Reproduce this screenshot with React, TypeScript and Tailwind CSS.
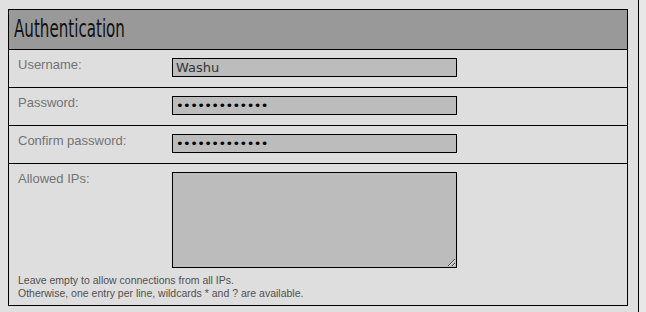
import React from 'react'

function Row({ label, children, last }: { label: string; children: React.ReactNode; last?: boolean }) {
  return (
    <div className={`flex ${last ? '' : 'border-b border-black'}`}>
      <div className="w-[163px] shrink-0 pl-[9px] pt-[5px] text-[13px] text-[#737373]">{label}</div>
      <div className="pt-[8px] pb-[10px]">{children}</div>
    </div>
  )
}

export default function App() {
  const field =
    'block h-[19px] w-[285px] border border-black bg-[#bcbcbc] px-[3px] text-[13px] text-[#333] outline-none'

  return (
    <div className="flex h-[312px] w-[646px] bg-[#e0e0e0]" style={{ fontFamily: '"Liberation Sans", Arial, sans-serif' }}>
      <div className="w-[638px] shrink-0 pl-[8px] pt-[9px]">
        <div className="w-[620px] border border-black bg-[#dedede]">
          <div className="h-[40px] border-b border-black bg-[#999999] pl-[5px]">
            <h2
              className="origin-left scale-x-[0.7] pt-[5px] text-[24px] leading-[28px] text-[#111]"
              style={{ fontFamily: '"DejaVu Sans Condensed", "Liberation Sans Narrow", "DejaVu Sans", sans-serif' }}
            >
              Authentication
            </h2>
          </div>

          <Row label="Username:">
            <input className={field} style={{ fontFamily: '"DejaVu Sans", Verdana, sans-serif' }} defaultValue="Washu" />
          </Row>
          <Row label="Password:">
            <input
              type="password"
              className={`${field} text-[11px] tracking-[-0.6px] text-black`}
              style={{ fontFamily: '"DejaVu Sans", Verdana, sans-serif' }}
              defaultValue="washupassword"
            />
          </Row>
          <Row label="Confirm password:">
            <input
              type="password"
              className={`${field} text-[11px] tracking-[-0.6px] text-black`}
              style={{ fontFamily: '"DejaVu Sans", Verdana, sans-serif' }}
              defaultValue="washupassword"
            />
          </Row>

          <div>
            <div className="flex">
              <div className="w-[163px] shrink-0 pl-[9px] pt-[5px] text-[13px] text-[#737373]">Allowed IPs:</div>
              <div className="pt-[8px]">
                <textarea className="block h-[96px] w-[285px] border border-black bg-[#bcbcbc] outline-none" />
              </div>
            </div>
            <div className="pl-[9px] pt-[6px] pb-[5px] text-[10.5px] leading-[13px] text-[#505050]">
              <p>Leave empty to allow connections from all IPs.</p>
              <p>Otherwise, one entry per line, wildcards * and ? are available.</p>
            </div>
          </div>
        </div>
      </div>
      <div className="flex-1 border-l border-black bg-[#e8e8e8]" />
    </div>
  )
}
